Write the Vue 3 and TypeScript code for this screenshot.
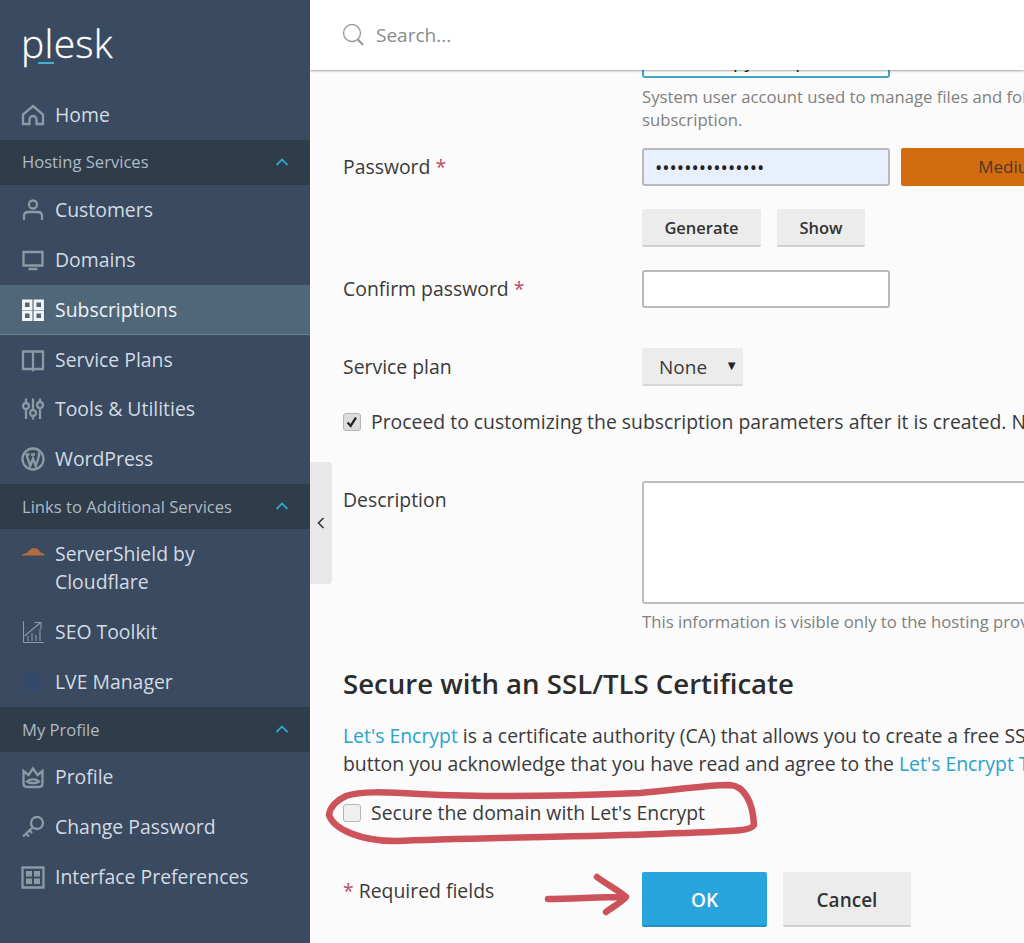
<script setup lang="ts">
interface NavItem {
  label: string
  stroke?: string
  fill?: string
  tone?: string
  active?: boolean
}
interface NavGroup {
  title?: string
  items: NavItem[]
}

const groups: NavGroup[] = [
  {
    items: [{ label: 'Home', stroke: 'M2 11.5 12 3l10 8.5V21h-6.5v-4.5a3.5 3.5 0 0 0-7 0V21H2z' }]
  },
  {
    title: 'Hosting Services',
    items: [
      { label: 'Customers', stroke: 'M12 2.5a4 4 0 1 0 0 8 4 4 0 0 0 0-8zM3 22v-4c0-2.5 2-4 4.5-4h9c2.5 0 4.500 1.500 4.500 4v4' },
      { label: 'Domains', stroke: 'M2.500 4h19v13.500h-19zM7.500 21h9' },
      { label: 'Subscriptions', stroke: 'M2.500 3h7.500v7.500H2.500zM14 3h7.500v7.500H14zM2.500 14H10v7.500H2.500zM14 14h7.500v7.500H14z', tone: 'bright', active: true },
      { label: 'Service Plans', stroke: 'M2 3.500h9c.7 0 1 .4 1 1 0-.6.300-1 1-1h9V21h-8c-1 0-1.600.3-2 1-.4-.7-1-1-2-1H2zM12 4.500V22' },
      { label: 'Tools & Utilities', stroke: 'M5 1.500V6M5 12v10M12 1.500V13M12 19v3.500M19 1.500V5M19 11v11M5 6a3 3 0 1 0 0 6 3 3 0 0 0 0-6zM12 13a3 3 0 1 0 0 6 3 3 0 0 0 0-6zM19 5a3 3 0 1 0 0 6 3 3 0 0 0 0-6z' },
      { label: 'WordPress', stroke: 'M12 1.500a10.500 10.500 0 1 0 0 21 10.500 10.500 0 0 0 0-21zM5.500 8l3.800 11 2.700-7.500L14.700 19l3.300-10c.5-1.500 0-2.500-1-3M4.500 7.500h4M10 7.500h4' }
    ]
  },
  {
    title: 'Links to Additional Services',
    items: [
      { label: 'ServerShield by Cloudflare', fill: 'M0 16.500c2-1.500 4-2.500 6-2.500 2-3 4.500-5 7.500-5 3 0 5 2.500 6 4.500 2 0 3.500 1.200 4.500 3z', tone: 'cloud' },
      { label: 'SEO Toolkit', stroke: 'M2.500 1v21.500H23M7 21v-5M11 21v-8M15 21v-6M19 21V9M3.500 16 19 3M13.500 2.500H20V9', tone: 'thin' },
      { label: 'LVE Manager', fill: 'M12 2a10 10 0 1 0 0 20 10 10 0 0 0 0-20z', tone: 'lve' }
    ]
  },
  {
    title: 'My Profile',
    items: [
      { label: 'Profile', stroke: 'M2.500 6 7.500 10 12 3.500 16.500 10l5-4v12.500c0 2-1.500 3.500-3.500 3.500H6c-2 0-3.500-1.500-3.500-3.500zM6 16.500c3-2.800 9-2.800 12 0-3 2.200-9 2.200-12 0z' },
      { label: 'Change Password', stroke: 'M16 2a6 6 0 1 0 0 12 6 6 0 0 0 0-12zM11.500 12.500 2 21.500M5 18.500l3 3M8.500 15.500l2.500 2.500' },
      { label: 'Interface Preferences', stroke: 'M1.500 2.500h21v20h-21z', fill: 'M5 6h6v5.500H5zM13 6h6v5.500h-6zM5 13.500h6V19H5zM13 13.500h6V19h-6z' }
    ]
  }
]
</script>

<template>
  <div class="app">
    <aside class="sidebar">
      <div class="brand">
        <span class="logo">plesk</span>
        <span class="logo-bar"></span>
      </div>
      <nav>
        <section v-for="group in groups" :key="group.title ?? 'root'">
          <header v-if="group.title" class="group-title">
            <span>{{ group.title }}</span>
            <svg class="chev" viewBox="0 0 14 8" width="14" height="8"><path d="M1.500 7 7 1.500 12.500 7" /></svg>
          </header>
          <a v-for="item in group.items" :key="item.label" class="item" :class="{ active: item.active }">
            <svg class="icon" :class="item.tone" viewBox="0 0 24 24" width="24" height="24">
              <path v-if="item.stroke" class="ln" :d="item.stroke" />
              <path v-if="item.fill" class="fl" :d="item.fill" />
            </svg>
            <span>{{ item.label }}</span>
          </a>
        </section>
      </nav>
    </aside>

    <main class="main">
      <div class="topbar">
        <svg class="search-icon" viewBox="0 0 24 24" width="24" height="24">
          <circle cx="10" cy="10" r="8.500" />
          <path d="M16 16.500 18 19M18 18.500l3 3.500" />
        </svg>
        <span class="search-text">Search...</span>
      </div>

      <div class="content">
        <div class="field-col first">
          <input class="input focus" type="text" value="demo-copy-temp" readonly />
          <p class="hint">System user account used to manage files and folders within the webspace of this<br />subscription.</p>
        </div>

        <div class="row pw-row">
          <label class="label">Password <em>*</em></label>
          <div class="inline">
            <input class="input filled" type="password" value="abcdefghijklmno" readonly />
            <div class="strength">Medium</div>
          </div>
        </div>

        <div class="row btn-row">
          <span></span>
          <div class="inline gap16">
            <button class="btn gen">Generate</button>
            <button class="btn show">Show</button>
          </div>
        </div>

        <div class="row confirm-row">
          <label class="label">Confirm password <em>*</em></label>
          <input class="input" type="password" readonly />
        </div>

        <div class="row plan-row">
          <label class="label">Service plan</label>
          <div class="select">None<span class="caret">▼</span></div>
        </div>

        <div class="check-row proceed">
          <span class="box checked">
            <svg viewBox="0 0 16 16" width="14" height="14"><path d="M3 8.500 6.500 12.500 12.500 3" /></svg>
          </span>
          <span>Proceed to customizing the subscription parameters after it is created. Note that the subscription is not yet active.</span>
        </div>

        <div class="row desc-row">
          <label class="label top">Description</label>
          <div class="desc-field">
            <div class="textarea"></div>
            <p class="hint desc-hint">This information is visible only to the hosting provider and the subscription owner at all times.</p>
          </div>
        </div>

        <h2 class="heading">Secure with an SSL/TLS Certificate</h2>
        <p class="para">
          <a>Let's Encrypt</a> is a certificate authority (CA) that allows you to create a free SSL/TLS certificate. By clicking the<br />
          button you acknowledge that you have read and agree to the <a>Let's Encrypt Terms of Service</a>.
        </p>

        <div class="check-row secure">
          <span class="box"></span>
          <span>Secure the domain with Let's Encrypt</span>
        </div>

        <div class="row footer-row">
          <span class="label req"><em>*</em> Required fields</span>
          <div class="inline gap16">
            <button class="btn ok">OK</button>
            <button class="btn cancel">Cancel</button>
          </div>
        </div>
      </div>

      <div class="collapse">
        <svg viewBox="0 0 10 14" width="10" height="14"><path d="M7.500 2 2.500 7l5 5" /></svg>
      </div>

      <svg class="annotation" viewBox="0 0 714 943" width="714" height="943">
        <path d="M36 796C50 791 75 792 110 794C170 797 260 796 330 793C365 790 395 785 420 785C434 786 443 802 444 825C440 832 420 831 350 834C260 837 150 838 85 841C52 841 24 830 19 815C20 807 27 800 36 796Z" />
        <path d="M238 899C260 899 290 897 314 897M287 877C296 884 308 890 316 897C311 903 302 907 296 912" />
      </svg>
    </main>
  </div>
</template>

<style>
html, body { margin: 0; background: #fbfbfb; }
</style>

<style scoped>
.app {
  display: flex;
  width: 1024px;
  height: 943px;
  overflow: hidden;
  font-family: "Open Sans", "Noto Sans", sans-serif;
  color: #3a3a3a;
}
.sidebar {
  flex: none;
  width: 310px;
  background: #3a4a60;
  color: #d3dbe3;
  font-size: 19.400px;
}
.brand {
  position: relative;
  height: 90px;
  box-sizing: border-box;
  padding: 16px 0 0 21px;
}
.logo {
  display: block;
  color: #fff;
  font-size: 39px;
  font-weight: 300;
  line-height: 53px;
  letter-spacing: 0.3px;
  -webkit-text-stroke: 0.3px #fff;
}
.logo-bar {
  position: absolute;
  left: 38px;
  top: 62px;
  width: 16px;
  height: 2px;
  background: #45b0d6;
}
.group-title {
  display: flex;
  align-items: center;
  justify-content: space-between;
  height: 45px;
  box-sizing: border-box;
  padding: 0 21px 1px 22px;
  background: #2f3c4a;
  color: #aebac4;
  font-size: 16.600px;
}
.chev path {
  fill: none;
  stroke: #37a3cc;
  stroke-width: 1.800;
}
.item {
  display: flex;
  align-items: center;
  gap: 10px;
  min-height: 49.900px;
  box-sizing: border-box;
  padding: 0 40px 0 21px;
  line-height: 28px;
}
.item.active {
  background: #506679;
  border-bottom: 1px solid #6b8296;
  color: #eef2f5;
  padding-top: 1px;
}
.item .icon {
  flex: none;
  align-self: center;
}
.icon .ln {
  fill: none;
  stroke: #8d9aa6;
  stroke-width: 2.300;
}
.icon .fl { fill: #8d9aa6; }
.icon.bright .ln { stroke: #f2f5f7; stroke-width: 2.900; }
.icon.thin .ln { stroke-width: 1.100; }
.icon.cloud .fl { fill: #b56a3f; }
.icon.lve .fl { fill: #35496a; }
.item:has(.cloud) { min-height: 78px; align-items: flex-start; padding-top: 11px; }
.item:has(.cloud) .icon { align-self: flex-start; margin-top: -1px; }

.main {
  position: relative;
  flex: 1;
  min-width: 0;
  overflow: hidden;
  background: #fbfbfb;
}
.topbar {
  position: relative;
  z-index: 2;
  display: flex;
  align-items: center;
  gap: 10px;
  height: 70px;
  box-sizing: border-box;
  padding-left: 32px;
  padding-bottom: 1px;
  background: #fff;
  box-shadow: 0 1px 2px rgba(0, 0, 0, 0.35);
}
.search-icon circle, .search-icon path {
  fill: none;
  stroke: #9c9c9c;
  stroke-width: 1.400;
}
.search-icon path { stroke-width: 2.200; }
.search-text { color: #8a8a8a; font-size: 19px; }

.content {
  width: 1100px;
  padding-left: 33px;
  font-size: 19.400px;
  line-height: 28px;
}
.row {
  display: grid;
  grid-template-columns: 299px 1fr;
  align-items: center;
}
.field-col.first {
  margin-left: 299px;
  margin-top: -30px;
}
.input {
  display: block;
  width: 248px;
  height: 38px;
  box-sizing: border-box;
  border: 2px solid #b9b9b9;
  border-radius: 3px;
  background: #fff;
  padding: 0 11px;
  font: inherit;
  color: #222;
  outline: none;
}
.input.focus { border-color: #3ea6c4; padding-top: 4px; font-size: 19px; }
.input.filled { background: #e8f0fe; }
.hint {
  margin: 7px 0 0;
  color: #808080;
  font-size: 16.700px;
  line-height: 23px;
  white-space: nowrap;
}
.label em { font-style: normal; color: #b84a68; }
.pw-row { margin-top: 17px; }
.inline { display: flex; gap: 11px; }
.inline.gap16 { gap: 16px; }
.strength {
  width: 220px;
  height: 38px;
  flex: none;
  border-radius: 2px;
  background: #d26c0e;
  color: #4a3a2a;
  font-size: 17px;
  line-height: 38px;
  text-align: center;
}
.btn {
  height: 38px;
  box-sizing: border-box;
  border: 0;
  border-bottom: 2px solid #cfcfcf;
  border-radius: 2px;
  background: #ececec;
  padding: 2px 0 0;
  color: #333;
  font: inherit;
  font-size: 16.500px;
  font-weight: 600;
}
.btn.gen { width: 119px; }
.btn.show { width: 88px; }
.btn-row { margin-top: 23px; }
.confirm-row { margin-top: 23px; }
.plan-row { margin-top: 40px; }
.select {
  position: relative;
  width: 101px;
  height: 38px;
  box-sizing: border-box;
  padding-left: 17px;
  border-bottom: 2px solid #d8d8d8;
  border-radius: 2px;
  background: #ececec;
  font-size: 19px;
  line-height: 38px;
}
.caret {
  position: absolute;
  right: 5px;
  top: -2px;
  font-size: 13px;
  color: #222;
}
.check-row {
  display: flex;
  align-items: center;
  gap: 10px;
  height: 28px;
  white-space: nowrap;
}
.box {
  display: flex;
  flex: none;
  align-items: center;
  justify-content: center;
  width: 18px;
  height: 18px;
  box-sizing: border-box;
  border: 1.500px solid #b5b5b5;
  border-radius: 3px;
  background: #f0f0f0;
}
.box.checked { background: #dcdcdc; }
.box svg path {
  fill: none;
  stroke: #222;
  stroke-width: 2.600;
}
.proceed { margin-top: 22px; }
.desc-row { margin-top: 45px; align-items: start; }
.label.top { padding-top: 5px; }
.textarea {
  width: 500px;
  height: 123px;
  box-sizing: border-box;
  border: 2px solid #bdbdbd;
  border-radius: 3px;
  background: #fff;
}
.desc-hint { margin-top: 6px; }
.heading {
  margin: 32px 0 0;
  color: #2c2c2c;
  font-size: 27.600px;
  font-weight: 600;
  line-height: 36px;
}
.para {
  margin: 21px 0 0;
  white-space: nowrap;
}
.para a { color: #28a3c9; }
.secure { margin-top: 21px; }
.footer-row { margin-top: 45px; align-items: start; }
.req { padding-top: 5px; }
.btn.ok {
  width: 125px;
  height: 55px;
  border-bottom-color: #2191c2;
  background: #28a5dc;
  color: #fff;
  font-size: 19px;
}
.btn.cancel {
  width: 128px;
  height: 55px;
  font-size: 19px;
}
.collapse {
  position: absolute;
  left: 0;
  top: 462px;
  display: flex;
  align-items: center;
  justify-content: center;
  width: 22px;
  height: 122px;
  border-radius: 0 4px 4px 0;
  background: #e8e8e8;
}
.collapse path {
  fill: none;
  stroke: #333;
  stroke-width: 1.600;
}
.annotation {
  position: absolute;
  left: 0;
  top: 0;
  z-index: 3;
  pointer-events: none;
}
.annotation path {
  fill: none;
  stroke: #c9444c;
  stroke-width: 6.500;
  stroke-linecap: round;
  stroke-linejoin: round;
  opacity: 0.92;
}
</style>
